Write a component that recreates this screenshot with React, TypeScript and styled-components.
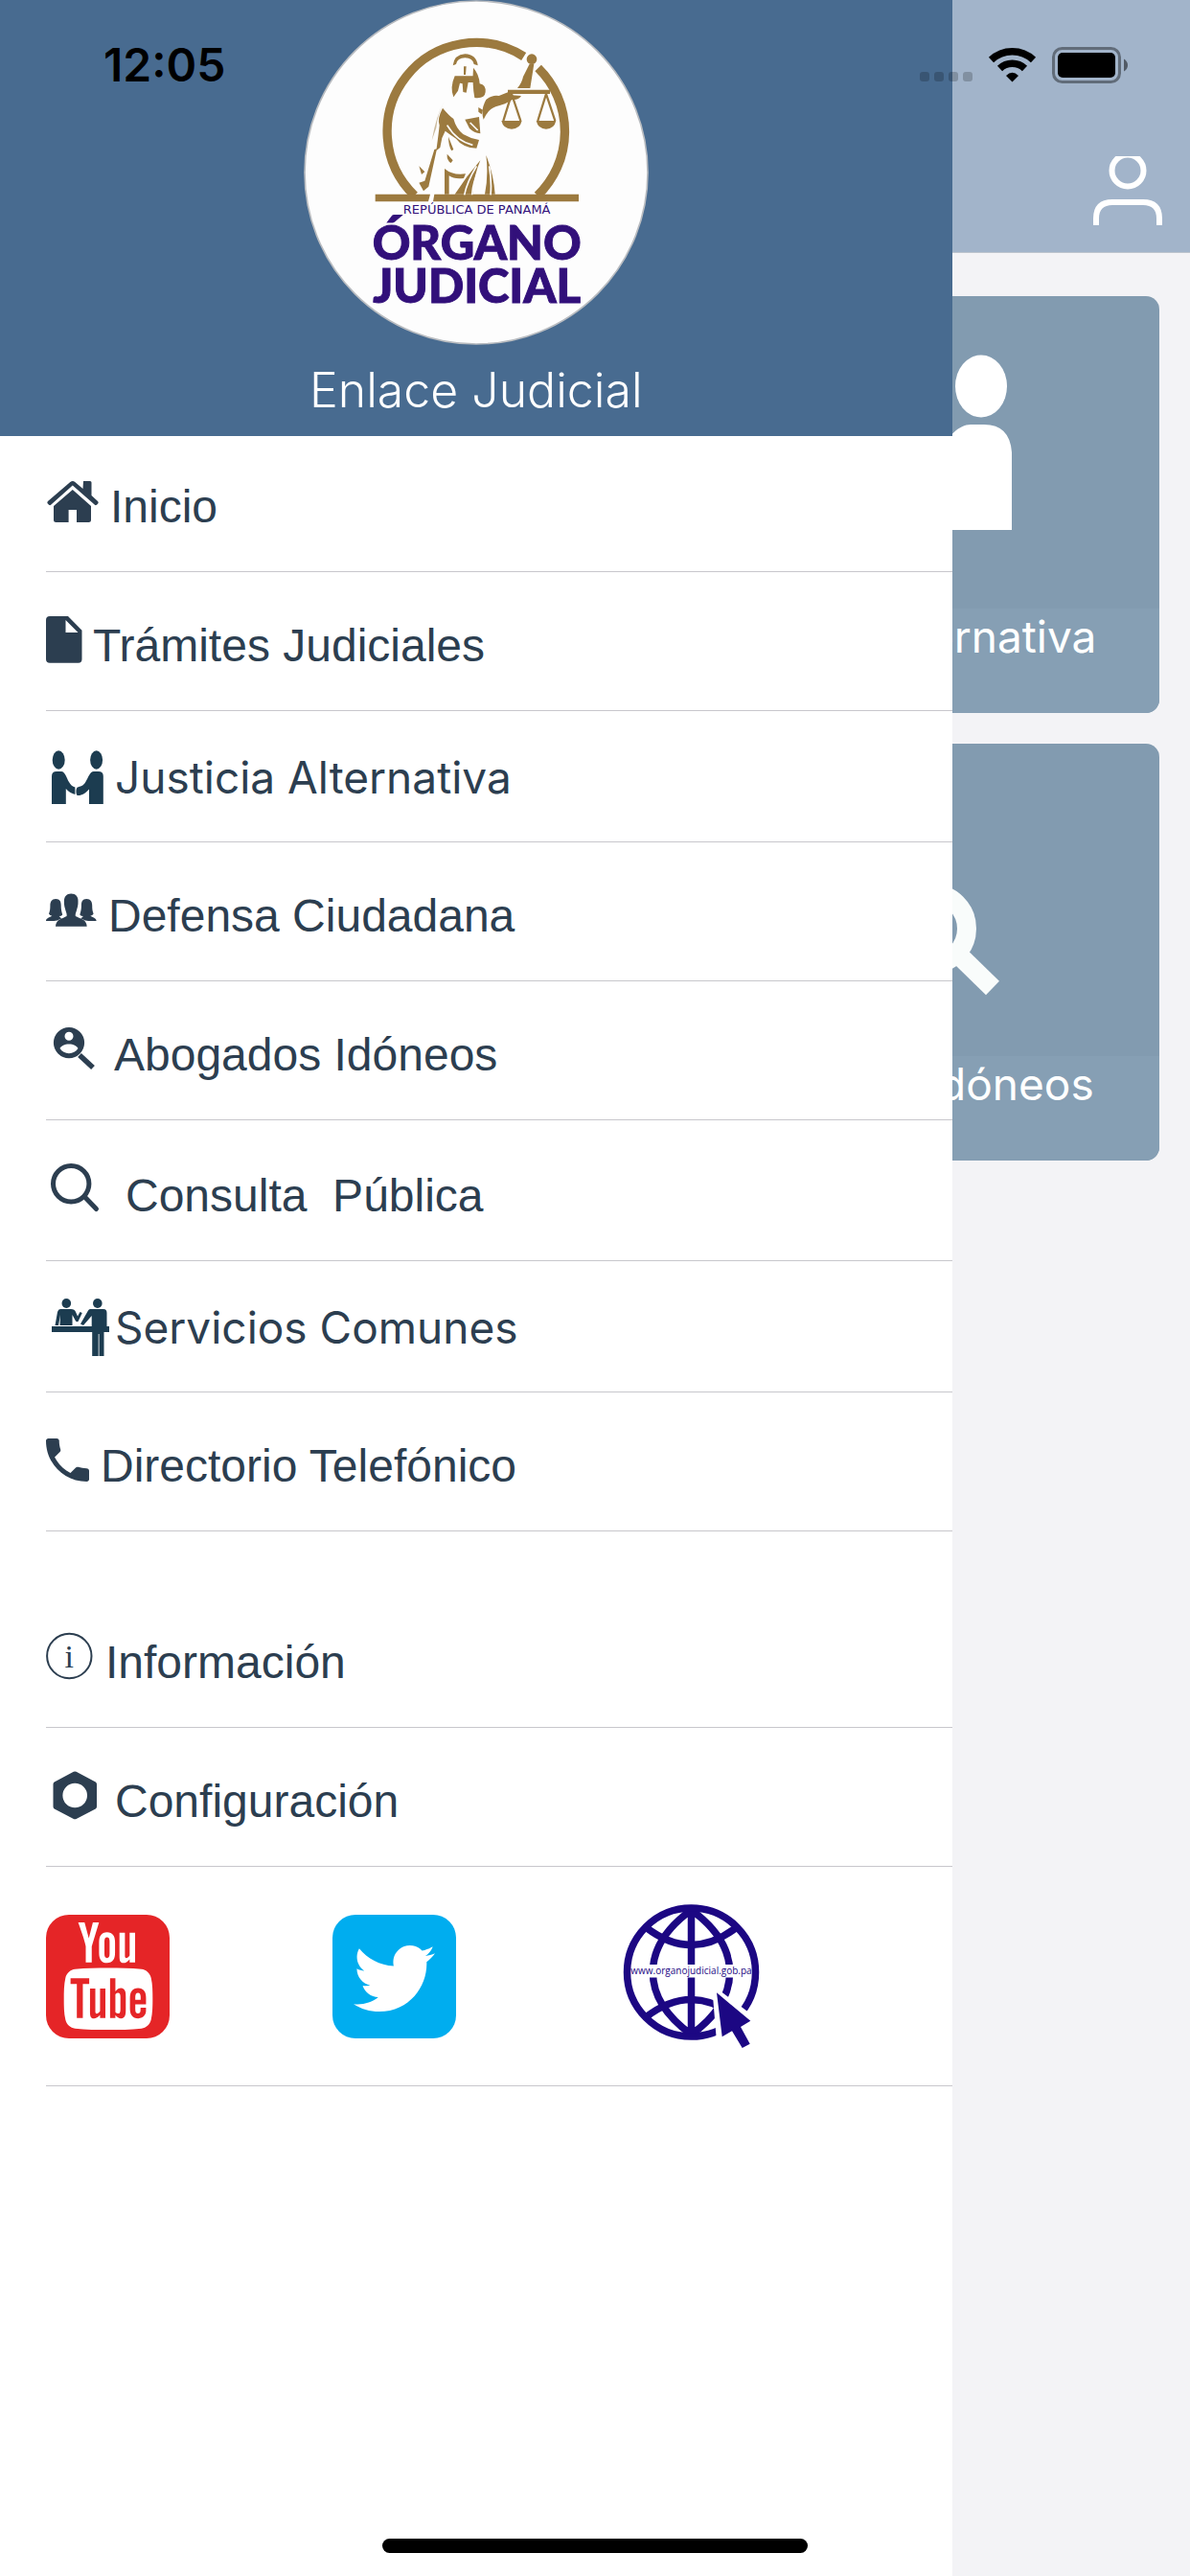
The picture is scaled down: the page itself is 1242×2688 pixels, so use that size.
import React from 'react';
import styled, {createGlobalStyle} from 'styled-components';
import {FaTwitter} from 'react-icons/fa';
import {TfiYoutube} from 'react-icons/tfi';

const GlobalStyle = createGlobalStyle`
  * {
    box-sizing: border-box;
  }

  body {
    margin: 0;
    background: #f3f3f6;
    font-family: Inter, Roboto, sans-serif;
  }
`;

const Screen = styled.div`
  position: relative;
  min-height: 100vh;
  overflow: hidden;
`;

const StatusBar = styled.div`
  position: absolute;
  z-index: 3;
  top: 0;
  left: 0;
  right: 0;
  display: flex;
  align-items: center;
  justify-content: space-between;
  height: 136px;
  padding: 0 64px 0 108px;
`;

const Clock = styled.time`
  color: #000;
  font-size: 48px;
  font-weight: 600;
  line-height: 60px;
`;

const HomeIndicator = styled.div`
  position: absolute;
  z-index: 3;
  bottom: 24px;
  left: 50%;
  width: 444px;
  height: 15px;
  margin-left: -222px;
  border-radius: 8px;
  background: #000;
`;

const TopBar = styled.header`
  display: flex;
  align-items: flex-end;
  justify-content: flex-end;
  height: 264px;
  padding: 0 28px 28px;
  border-bottom: 1px solid #bcc3cd;
  background: #a2b4ca;
`;

const IconButton = styled.button`
  display: flex;
  padding: 0;
  border: 0;
  background: none;
`;

const CardGrid = styled.main`
  display: grid;
  grid-template-columns: 1fr 1fr;
  gap: 32px 88px;
  padding: 45px 32px;
`;

const Card = styled.a`
  display: flex;
  flex-direction: column;
  grid-column: 2;
  overflow: hidden;
  border-radius: 14px;
  background: #829bb0;
  color: #fff;
  text-decoration: none;
`;

const CardPicture = styled.div`
  display: flex;
  align-items: center;
  justify-content: center;
  height: 326px;
`;

const CardLabel = styled.span`
  height: 109px;
  background: #869fb4;
  font-size: 46px;
  line-height: 58px;
  text-align: center;
`;

const Drawer = styled.aside`
  position: absolute;
  z-index: 2;
  top: 0;
  bottom: 0;
  left: 0;
  width: 80%;
  background: #fff;
`;

const DrawerHeader = styled.header`
  display: flex;
  flex-direction: column;
  align-items: center;
  background: #486b90;
`;

const Title = styled.h1`
  margin: 0;
  color: #fff;
  font-size: 50px;
  font-weight: 300;
  line-height: 95px;
`;

const MenuList = styled.ul`
  margin: 0;
  padding: 0 0 0 48px;
  list-style: none;

  & + & {
    margin-top: 60px;
  }
`;

const MenuLink = styled.a<{ $height: number; $system?: boolean }>`
  display: flex;
  align-items: flex-end;
  height: ${({$height}) => $height}px;
  padding-bottom: 37px;
  border-bottom: 1px solid #c8c7cc;
  color: #2c3e50;
  font-family: ${({$system}) => $system ? 'Inter, sans-serif' : '"Liberation Sans", Arial, sans-serif'};
  font-size: ${({$system}) => $system ? 46 : 48}px;
  line-height: 60px;
  text-decoration: none;
  white-space: pre;
`;

const SocialRow = styled.div`
  display: grid;
  grid-template-columns: repeat(3, 1fr);
  align-items: center;
  height: 229px;
  margin-left: 48px;
  padding-right: 48px;
  border-bottom: 1px solid #c8c7cc;
`;

const SocialLink = styled.a`
  display: flex;
`;

const GOLD = '#9c7a3f';
const PURPLE = '#32107a';
const INK = '#2c3e50';
const TEAL = '#1c3c50';
const NAVY = '#1c0783';

// Every menu icon is 64px tall and reaches 14px under the baseline of its label
const MenuIcon: React.FC<{ width: number; color?: string; children: React.ReactNode }> = ({width, color = INK, children}) => (
    <svg width={width} height="64" viewBox={`0 0 ${width} 64`} fill={color} stroke="none" aria-hidden="true">
        {children}
    </svg>
);

const HomeIcon = () => (
    <MenuIcon width={67}>
        <path d="M39 7h7q1.500 0 1.500 1.500V22l6.500 6q1.200 1.300 .2 2.500l-1.200 1.300q-1.200 .8-2.400-.2L27.800 11.500 5.400 31.600q-1.200 1-2.400 .2l-1.200-1.300q-1-1.200 .2-2.500L25.300 8q2.500-2 5 0L38.500 15z"/>
        <path d="M27.800 16L47 33v14.500q0 2.500-2.500 2.500H32V37h-8.400v13H10.500Q8 50 8 47.500V33z"/>
    </MenuIcon>
);

const FileIcon = () => (
    <MenuIcon width={49}>
        <path fillRule="evenodd" d="M4 3h19l14.500 14.700V48q0 3.700-3.700 3.700H4Q0 51.700 0 48V7Q0 3 4 3zM20.500 7v13h13z"/>
    </MenuIcon>
);

const HandshakeIcon = () => (
    <MenuIcon width={72} color={TEAL}>
        <ellipse cx="13.200" cy="16" rx="6.500" ry="9.700"/>
        <ellipse cx="52.600" cy="16" rx="6.500" ry="9.700"/>
        <path d="M6 62V33q0-5 5-5h5c4 0 5.500 7 8 11q2.500 4.500 6.400 5.500v7.500Q24.500 50.500 20.800 46v16z"/>
        <path d="M59.800 62V33q0-5-5-5h-5c-4 0-5.500 6-8.500 11-2.500 4.500-5.500 4.500-8.500 5.500-1.800 1.500-1.700 7.500 0 8.500 4 .5 9-2.500 12.200-6.500V62z"/>
    </MenuIcon>
);

const UsersIcon = () => (
    <MenuIcon width={65}>
        <path d="M26.200 10.500c5 0 7.600 3.300 7.300 8 .3 4-1 7-1.700 10-.7 2.500-1.300 3-1 5.500 4.300 2.500 11.700 3 11.900 10.700H10c.2-7.700 7.600-8.200 11.600-10.700 .3-2.500-.3-3-1-5.500-.7-3-2-6-1.700-10 0-5 2.600-8 7.300-8z"/>
        <path d="M10.200 16c4.500 0 5.500 3 5.500 7 0 5 1 7 1.500 9.500q-1 1.500-3.500 1.500l2.500 2.500Q11 39 8.500 39H0c0-3 4-3.500 6.300-5.200Q4 33.500 3 31.500c1-2.500 1.400-5 1.400-8.500 0-4 1.600-7 5.800-7z"/>
        <path d="M42.400 16c-4.500 0-5.500 3-5.500 7 0 5-1 7-1.500 9.500q1 1.500 3.500 1.500l-2.500 2.500q5.200 2.500 7.700 2.500h8.500c0-3-4-3.500-6.300-5.200q2.300-.3 3.300-2.300c-1-2.500-1.400-5-1.400-8.500 0-4-1.600-7-5.800-7z"/>
    </MenuIcon>
);

const LawyerSearchIcon = () => (
    <MenuIcon width={71}>
        <path fillRule="evenodd" d="M24 5a16 16 0 1 1 0 32.200A16 16 0 0 1 24 5zm0 4.800a4.500 4.500 0 1 0 0 9 4.500 4.500 0 0 0 0-9zm0 12.700c-4.500 0-8.200 1.800-9.500 4.500 2.200 3.300 5.500 5.200 9.500 5.200s7.300-1.900 9.500-5.200c-1.300-2.700-5-4.500-9.500-4.500z"/>
        <path d="M35 34l14 13" stroke={INK} strokeWidth="5.500"/>
    </MenuIcon>
);

const SearchIcon = () => (
    <MenuIcon width={83}>
        <g fill="none" stroke={INK} strokeWidth="5" strokeLinecap="round">
            <circle cx="26.200" cy="21.300" r="18.700"/>
            <path d="M40.500 35L52.500 47.500"/>
        </g>
    </MenuIcon>
);

const CounterIcon = () => (
    <MenuIcon width={72} color={TEAL}>
        <ellipse cx="21.300" cy="9" rx="4.800" ry="5"/>
        <ellipse cx="53.800" cy="9" rx="4.800" ry="5"/>
        <path d="M15 15h11q4 0 5 3l2 4.500 2.500-4.500 2.300 1-4.300 9q-1.500 .5-2.500-.5L27.500 21v11h-13l.5-11-2 11H9.500L12 18q.8-3 3-3z"/>
        <path d="M46 15h14q3.500 0 3.500 4v14H66v6h-5.500v25h-5V41h-.8v23h-6.500V39H6v-6h41.700V22l-8.700 10-3-1.500L44 16.500q.8-1.500 2-1.500z"/>
    </MenuIcon>
);

const PhoneIcon = () => (
    <MenuIcon width={57}>
        <path transform="translate(-7.500 -2.500) scale(2.500)" d="M6.620 10.790c1.440 2.830 3.760 5.140 6.590 6.590l2.200-2.200c.27-.27.67-.36 1.020-.24 1.120.37 2.330.57 3.570.57.55 0 1 .45 1 1V20c0 .55-.45 1-1 1-9.390 0-17-7.610-17-17 0-.55.45-1 1-1h3.500c.55 0 1 .45 1 1 0 1.250.2 2.450.57 3.570.11.35.03.74-.25 1.020l-2.200 2.200z"/>
    </MenuIcon>
);

const InfoIcon = () => (
    <MenuIcon width={62}>
        <circle cx="24.300" cy="27" r="23.200" fill="none" stroke={INK} strokeWidth="2"/>
        <text x="24.300" y="39" fontFamily="Liberation Serif, serif" fontSize="34" textAnchor="middle">i</text>
    </MenuIcon>
);

const NutIcon = () => (
    <MenuIcon width={72}>
        <path fillRule="evenodd" d="M28.800 2.800q1.400-.8 2.800 0L51.800 13.500q1.200 .8 1.200 2.300v23.500q0 1.500-1.200 2.300L31.600 51.900q-1.400 .8-2.800 0L8.700 41.600q-1.200-.8-1.200-2.300V15.800q0-1.500 1.200-2.300zM30.200 14.700a12.800 12.800 0 1 0 0 25.600 12.800 12.800 0 0 0 0-25.600z"/>
    </MenuIcon>
);

const JusticeLogo = () => (
    <svg width="360" height="360" viewBox="0 0 1080 1080" role="img" aria-label="Órgano Judicial">
        <circle cx="540" cy="540" r="537" fill="#fdfdfd" stroke="#b9bcc0" strokeWidth="5"/>
        <g transform="translate(-51 0)">
            <g fill="none" stroke={GOLD} strokeWidth="28">
                <path d="M398 612A278 278 0 0 1 740 177"/>
                <path d="M785 213A278 278 0 0 1 783 612"/>
            </g>
            <g fill={GOLD}>
                <path d="M275 608h172l-6 23H275zM460 608h452v23H456z"/>
                {/* scales */}
                <circle cx="765" cy="185" r="16"/>
                <path d="M758 200h14l-12 76h-40q14-16 18-36z"/>
                <path d="M690 281h132v13H690z"/>
                <path d="M670 378h64q-6 26-32 26t-32-26zM779 378h62q-6 26-31 26t-31-26z"/>
                {/* head and hair */}
                <path d="M518 205q4-34 38-36 36 2 40 36l-12-4q-4-20-28-20t-28 20z"/>
                <path d="M524 238h66l-4 20h-20l-6 32-10-2-2-26-8-2-6 24-14 20q-12-30 4-66z"/>
                <path d="M582 212q18 20 20 50 20 4 18 26-2 22-34 18-8-44-4-94z"/>
                <path d="M552 208h8l-2 26h-6z"/>
                {/* raised arm */}
                <path d="M622 312q20-16 40-12l30-12 10 10 30 2q-8 14-28 12-20 14-52 22-24 8-38 40-10-30 8-62z"/>
                <path d="M598 336l14 8-4 14-10-8z"/>
                {/* robe */}
                <path d="M486 338q20 24 34 34 8 30 30 48 24 14 50 18l-8 26q-44-2-64-30-18-12-34-24l-10 22-6 30-12 10q8-60 10-80-8-20 10-54z"/>
                <path d="M556 374l44-8 4 52q-20-2-34-16z"/>
                <path d="M490 320q-24 40-38 120l14-40q4-44 24-80z" opacity=".5"/>
                <path d="M504 428l16 40-6 4q-10-16-10-44zM500 482l18 20-6 8q-14-8-12-28z"/>
                <path d="M492 528q26 22 66 16l-6 14q-30 4-46-8v58h-14zM604 502q-44 50-80 106h56q4-60 24-106zM622 486q24 60 28 122h-32q12-60 4-122z"/>
                <path d="M468 466l-26 118-16 14-14-26 18-6 30-98zM412 520l18 18-10 8z"/>
            </g>
            <g fill="none" stroke={GOLD} strokeWidth="7">
                <path d="M702 294l-26 84M702 294l28 84M810 294l-26 84M810 294l28 84"/>
            </g>
            <g stroke="#fdfdfd" strokeWidth="5" fill="none">
                <path d="M592 520q-30 50-38 90M604 520q-24 50-26 90M632 520q8 50 4 90M500 392q30 50 80 62M572 384l24 24"/>
            </g>
            <g fill={PURPLE} textAnchor="middle">
                <text x="593" y="670" fontFamily="DejaVu Sans, sans-serif" fontSize="39">REPÚBLICA DE PANAMÁ</text>
                <g fontFamily="Lato, sans-serif" fontWeight="900" fontSize="147" stroke={PURPLE} strokeWidth="3">
                    <text x="593" y="812">ÓRGANO</text>
                    <text x="593" y="948">JUDICIAL</text>
                </g>
            </g>
        </g>
    </svg>
);

const YoutubeLogo = () => (
    <svg width="129" height="129" viewBox="0 0 129 129">
        <rect width="129" height="129" rx="24" fill="#e52527"/>
        <TfiYoutube x="9" y="8" size="112" color="#fff"/>
    </svg>
);

const TwitterLogo = () => (
    <svg width="129" height="129" viewBox="0 0 129 129">
        <rect width="129" height="129" rx="24" fill="#00adef"/>
        <FaTwitter x="22" y="24" size="85" color="#fff"/>
    </svg>
);

const WebsiteLogo = () => (
    <svg width="150" height="150" viewBox="0 0 150 150">
        <g fill="none" stroke={NAVY} strokeWidth="7.500">
            <path d="M75.500 5v132M75.500 6C22 45 22 97 75.500 136M75.500 6C129 45 129 97 75.500 136"/>
            <path d="M28 24q47.500 37 95 0M28 118q47.500-37 95 0"/>
        </g>
        <path fill="#fff" d="M10 63h131v13.500H10z"/>
        <text x="75.500" y="73" fill={NAVY} fontFamily="Open Sans, Noto Sans, sans-serif" fontWeight="500" fontSize="10" textAnchor="middle">www.organojudicial.gob.pa</text>
        <circle cx="75.500" cy="71" r="67" fill="none" stroke={NAVY} strokeWidth="7.500"/>
        <path fill="#fff" d="M97 84l48 36-10 8 8 22h-20l-18-6-3 0z"/>
        <path fill={NAVY} d="M102 92.300l35.300 29.400L127 128l9.700 17.700-8 4.300L118 132.300l-10.300 6z"/>
    </svg>
);

const mainItems = [
    {label: 'Inicio', icon: <HomeIcon/>, height: 142},
    {label: 'Trámites Judiciales', icon: <FileIcon/>, height: 145},
    {label: 'Justicia Alternativa', icon: <HandshakeIcon/>, height: 137, system: true},
    {label: 'Defensa Ciudadana', icon: <UsersIcon/>, height: 145},
    {label: 'Abogados Idóneos', icon: <LawyerSearchIcon/>, height: 145},
    {label: 'Consulta  Pública', icon: <SearchIcon/>, height: 147},
    {label: 'Servicios Comunes', icon: <CounterIcon/>, height: 137, system: true},
    {label: 'Directorio Telefónico', icon: <PhoneIcon/>, height: 145},
];

const extraItems = [
    {label: 'Información', icon: <InfoIcon/>, height: 145},
    {label: 'Configuración', icon: <NutIcon/>, height: 145},
];

const Menu: React.FC<{ items: { label: string; icon: React.ReactNode; height: number; system?: boolean }[] }> = ({items}) => (
    <MenuList>
        {items.map((item) => (
            <li key={item.label}>
                <MenuLink href="#" $height={item.height} $system={item.system}>
                    {item.icon}
                    <span>{item.label}</span>
                </MenuLink>
            </li>
        ))}
    </MenuList>
);

const App: React.FC = () => {
    return (
        <Screen>
            <GlobalStyle/>
            <StatusBar>
                <Clock>12:05</Clock>
                <svg width="218" height="38" viewBox="0 0 218 38" aria-hidden="true">
                    <g fillOpacity=".2">
                        <rect x="0" y="26" width="10" height="10" rx="3"/>
                        <rect x="15" y="26" width="10" height="10" rx="3"/>
                        <rect x="30" y="26" width="10" height="10" rx="3"/>
                        <rect x="45" y="26" width="10" height="10" rx="3"/>
                    </g>
                    <g fill="none" stroke="#000" strokeWidth="7.500">
                        <path d="M74.500 13.500a32 32 0 0 1 44 0"/>
                        <path d="M83.500 22.500a19 19 0 0 1 26 0"/>
                    </g>
                    <path d="M96.500 36.500l-6.500-6.500q6.500-6.500 13 0z"/>
                    <rect x="139.500" y="1.500" width="69" height="35" rx="9" fill="none" stroke="#000" strokeOpacity=".4" strokeWidth="3"/>
                    <rect x="144" y="6" width="60" height="26" rx="5"/>
                    <path d="M213 12.500q4 2.500 4 6.500t-4 6.500z" fillOpacity=".5"/>
                </svg>
            </StatusBar>

            <TopBar>
                <IconButton aria-label="Perfil">
                    <svg width="74" height="72" viewBox="0 0 74 72" fill="none" stroke="#fff" strokeWidth="6">
                        <circle cx="37" cy="15" r="16.500"/>
                        <path d="M4 72V65Q4 48 21 48H53Q70 48 70 65V72"/>
                    </svg>
                </IconButton>
            </TopBar>
            <CardGrid>
                <Card href="#">
                    <CardPicture>
                        <svg width="236" height="204" viewBox="0 0 236 204" fill="#fff">
                            <ellipse cx="32" cy="33" rx="27" ry="32.500"/>
                            <ellipse cx="204" cy="33" rx="27" ry="32.500"/>
                            <path d="M0 183V102q0-29 29-29h14c20 0 30 14 40 32l35 20v26q-32 0-55-20v52z"/>
                            <path d="M236 183V102q-2-29-29-29h-14c-12 0-24 12-34 32l-41 20v26q32 0 55-20v52z"/>
                        </svg>
                    </CardPicture>
                    <CardLabel>Justicia Alternativa</CardLabel>
                </Card>
                <Card href="#">
                    <CardPicture>
                        <svg width="236" height="200" viewBox="0 0 236 200" fill="none" stroke="#f9fcfb" strokeWidth="20">
                            <circle cx="152" cy="130" r="37"/>
                            <path d="M176 153l40 39"/>
                        </svg>
                    </CardPicture>
                    <CardLabel>Abogados Idóneos</CardLabel>
                </Card>
            </CardGrid>

            <Drawer>
                <DrawerHeader>
                    <JusticeLogo/>
                    <Title>Enlace Judicial</Title>
                </DrawerHeader>
                <nav>
                    <Menu items={mainItems}/>
                    <Menu items={extraItems}/>
                </nav>
                <SocialRow>
                    <SocialLink href="#" aria-label="YouTube"><YoutubeLogo/></SocialLink>
                    <SocialLink href="#" aria-label="Twitter"><TwitterLogo/></SocialLink>
                    <SocialLink href="#" aria-label="Sitio web"><WebsiteLogo/></SocialLink>
                </SocialRow>
            </Drawer>
            <HomeIndicator/>
        </Screen>
    );
};

export default App;
